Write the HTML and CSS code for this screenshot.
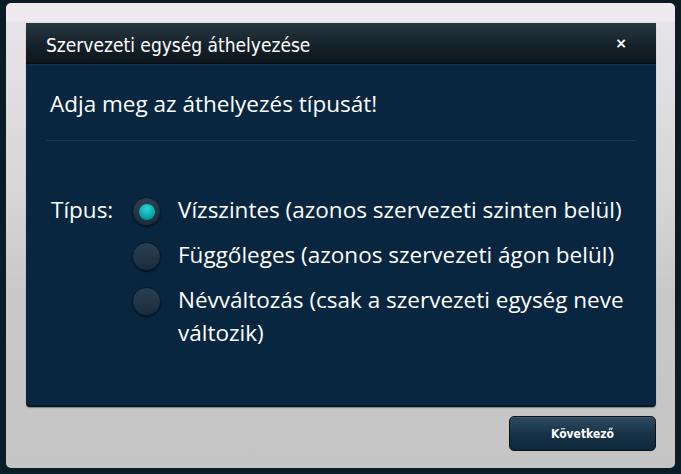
FILE: index.html
```html
<!DOCTYPE html>
<html lang="hu">
<head>
<meta charset="utf-8">
<title>Szervezeti egység áthelyezése</title>
<link rel="stylesheet" href="styles.css">
</head>
<body>
<div class="window">
  <div class="dialog">
    <div class="header">
      <span class="title">Szervezeti egység áthelyezése</span>
      <span class="close">×</span>
    </div>
    <div class="content">
      <h1 class="heading">Adja meg az áthelyezés típusát!</h1>
      <div class="divider"></div>
      <div class="form">
        <div class="label">Típus:</div>
        <div class="options">
          <div class="option"><span class="radio checked"></span><span class="opt-text">Vízszintes (azonos szervezeti szinten belül)</span></div>
          <div class="option"><span class="radio"></span><span class="opt-text">Függőleges (azonos szervezeti ágon belül)</span></div>
          <div class="option"><span class="radio"></span><span class="opt-text">Névváltozás (csak a szervezeti egység neve változik)</span></div>
        </div>
      </div>
    </div>
  </div>
  <div class="footer">
    <button class="next">Következő</button>
  </div>
</div>
</body>
</html>
```
FILE: styles.css
```css
html, body {
  margin: 0;
  padding: 0;
}
body {
  background: #0a1d27;
  width: 681px;
  height: 474px;
  overflow: hidden;
  font-family: "Open Sans", "Noto Sans", sans-serif;
}
.window {
  box-sizing: border-box;
  margin: 3px 0 0 6px;
  width: 669px;
  height: 465px;
  border-radius: 5px;
  background: linear-gradient(#efeaee 0px, #efeaee 18px, #e6e4e6 19px, #d6d5d6 200px, #c7c7c7 300px, #c5c5c5 100%);
  padding: 20px 19px 0 20px;
}
.dialog {
  width: 630px;
  height: 382px;
  background: #082640;
  border-radius: 0 0 4px 4px;
  box-shadow: 0 2px 0 #061722, 0 3px 1px rgba(0,0,0,0.35);
  display: flex;
  flex-direction: column;
}
.header {
  height: 40px;
  flex: none;
  display: flex;
  align-items: center;
  justify-content: space-between;
  padding: 0 29px 0 20px;
  background: linear-gradient(#263841, #17242c 50%, #0b141a);
  border-bottom: 1px solid #050e14;
  box-shadow: 0 1px 0 #0f2f4d, 0 2px 0 #0c2a45;
}
.title {
  color: #ffffff;
  font-family: "DejaVu Sans Condensed", "DejaVu Sans", sans-serif;
  font-size: 19px;
  padding-top: 3px;
}
.close {
  color: #ffffff;
  font-family: "DejaVu Sans", sans-serif;
  font-weight: bold;
  font-size: 14px;
}
.content {
  padding: 23px 20px 0 20px;
  color: #ffffff;
}
.heading {
  margin: 0 0 0 4px;
  font-weight: normal;
  font-size: 22.5px;
  line-height: 33px;
  color: #ffffff;
}
.divider {
  height: 1px;
  background: #163a58;
  margin: 20px 0 0 0;
}
.form {
  display: flex;
  margin-top: 52px;
  margin-left: 5px;
}
.label {
  width: 81px;
  font-size: 22.5px;
  line-height: 33px;
}
.options {
  display: flex;
  flex-direction: column;
  gap: 12px;
  width: 500px;
}
.option {
  display: flex;
  align-items: flex-start;
}
.radio {
  flex: none;
  box-sizing: border-box;
  width: 29px;
  height: 29px;
  border-radius: 50%;
  margin-top: 4px;
  margin-right: 17px;
  background: linear-gradient(#2a3f52, #1a2d3e);
  border: 1px solid #0a1824;
  box-shadow: 0 1px 1px rgba(0,0,0,0.6);
  display: flex;
  align-items: center;
  justify-content: center;
}
.radio.checked::after {
  content: "";
  width: 16px;
  height: 16px;
  border-radius: 50%;
  background: radial-gradient(circle at 50% 30%, #2fd6d6, #0aa5ab 60%, #067c84);
}
.opt-text {
  font-size: 22.5px;
  line-height: 33px;
  max-width: 454px;
}
.footer {
  display: flex;
  justify-content: flex-end;
  margin-top: 11px;
  padding-right: 0;
}
.next {
  width: 147px;
  height: 35px;
  border-radius: 5px;
  border: 1px solid #07131c;
  background: linear-gradient(#2f4b60, #173347 50%, #0f283b);
  color: #ffffff;
  font-family: "DejaVu Sans Condensed", "DejaVu Sans", sans-serif;
  font-size: 12px;
  font-weight: bold;
  padding: 0;
  box-shadow: inset 0 1px 0 rgba(255,255,255,0.08);
}
```
